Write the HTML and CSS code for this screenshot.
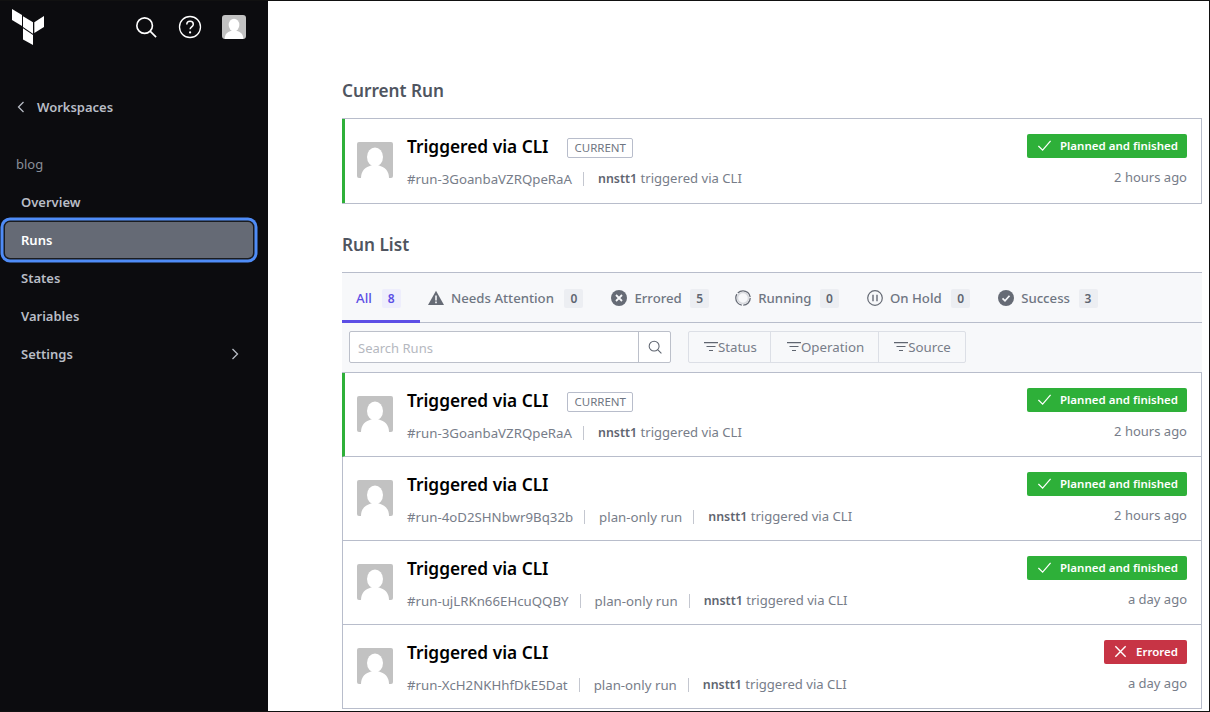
FILE: index.html
```html
<!DOCTYPE html>
<html lang="en">
<head>
<meta charset="UTF-8">
<title>Runs | blog</title>
<link rel="stylesheet" href="styles.css">
</head>
<body>
    <svg class="defs" width="0" height="0">
        <symbol id="avatar" viewBox="0 0 36 36">
            <rect width="36" height="36" fill="#c2c2c2"/>
            <ellipse cx="18" cy="15" rx="8" ry="9.500" fill="#fff"/>
            <path d="M4 36c0-8 5-11 10-12.500h8c5 1.500 10 4.500 10 12.500z" fill="#fff"/>
        </symbol>
        <symbol id="check" viewBox="0 0 16 16">
            <path d="M1.500 8.500 6 13l8.500-10" fill="none" stroke="#fff" stroke-width="1.300"/>
        </symbol>
        <symbol id="cross" viewBox="0 0 16 16">
            <path d="M2.500 2.500l11 11M13.500 2.500l-11 11" fill="none" stroke="#fff" stroke-width="1.500"/>
        </symbol>
        <symbol id="filter" viewBox="0 0 14 10">
            <path d="M0 .7h14M2.500 4.500h9M5 8.500h4" fill="none" stroke="#5f6570" stroke-width="1.200"/>
        </symbol>
        <symbol id="search" viewBox="0 0 24 24">
            <circle cx="10.500" cy="10.500" r="8.500" fill="none" stroke="currentColor" stroke-width="1.800"/>
            <path d="M16.500 16.500 23 23" fill="none" stroke="currentColor" stroke-width="1.800"/>
        </symbol>
    </svg>

    <div class="frame">
        <div class="sidebar">
            <div class="topbar">
                <svg class="logo" viewBox="0 0 33 37" width="33" height="37">
                    <path d="M0 0l10 6v11L0 11z" fill="#fff"/>
                    <path d="M11 7.300l10 6v11.400l-10-6.700z" fill="#fff"/>
                    <path d="M22.300 13.300 32 7v11l-9.700 6z" fill="#fff"/>
                    <path d="M11 19.300l10 6.700v10l-10-5.500z" fill="#fff"/>
                </svg>
                <div class="top-icons">
                    <svg class="top-search" width="22" height="22"><use href="#search"/></svg>
                    <svg width="24" height="24" viewBox="0 0 24 24">
                        <circle cx="12" cy="12" r="10.500" fill="none" stroke="#fff" stroke-width="1.300"/>
                        <path d="M8.800 9.500c0-2 1.400-3.200 3.300-3.200s3.200 1.200 3.200 2.900c0 2.600-3.200 2.600-3.200 5.100" fill="none" stroke="#fff" stroke-width="1.500"/>
                        <circle cx="12.100" cy="17.400" r="1.100" fill="#fff"/>
                    </svg>
                    <svg class="top-avatar" width="24" height="24"><use href="#avatar"/></svg>
                </div>
            </div>

            <div class="back">
                <svg width="8" height="12" viewBox="0 0 8 12"><path d="M6.500 1 1.500 6l5 5" fill="none" stroke="#b8bcc4" stroke-width="1.300"/></svg>
                <span>Workspaces</span>
            </div>

            <div class="ws-name">blog</div>

            <div class="nav">
                <div class="nav-item">Overview</div>
                <div class="nav-item active">Runs</div>
                <div class="nav-item">States</div>
                <div class="nav-item">Variables</div>
                <div class="nav-item">
                    <span>Settings</span>
                    <svg width="8" height="12" viewBox="0 0 8 12"><path d="M1.500 1l5 5-5 5" fill="none" stroke="#b8bcc4" stroke-width="1.300"/></svg>
                </div>
            </div>
        </div>

        <div class="main-content">
            <h2 class="first">Current Run</h2>
            <div class="run-box">
                <div class="run current">
                    <svg class="avatar"><use href="#avatar"/></svg>
                    <div class="run-info">
                        <div class="run-title">Triggered via CLI <span class="tag">CURRENT</span></div>
                        <div class="run-meta"><span>#run-3GoanbaVZRQpeRaA</span><i></i><span class="who"><b>nnstt1</b> triggered via CLI</span></div>
                    </div>
                    <div class="run-status">
                        <div class="badge ok"><svg><use href="#check"/></svg>Planned and finished</div>
                        <div class="when">2 hours ago</div>
                    </div>
                </div>
            </div>

            <h2>Run List</h2>
            <div class="tabs">
                <div class="tab selected">All <span class="count">8</span></div>
                <div class="tab">
                    <svg width="16" height="16" viewBox="0 0 16 16"><path d="M8 .8 16 15H0z" fill="#666b75"/><path d="M8 5.500v5M8 11.500v1.800" stroke="#f7f8fa" stroke-width="1.600"/></svg>
                    Needs Attention <span class="count">0</span>
                </div>
                <div class="tab">
                    <svg width="16" height="16" viewBox="0 0 16 16"><circle cx="8" cy="8" r="8" fill="#666b75"/><path d="M5 5l6 6M11 5l-6 6" stroke="#f7f8fa" stroke-width="1.800"/></svg>
                    Errored <span class="count">5</span>
                </div>
                <div class="tab">
                    <svg width="16" height="16" viewBox="0 0 16 16"><circle cx="8" cy="8" r="7.200" fill="none" stroke="#666b75" stroke-width="1.300" stroke-dasharray="11 1.500 14 1.500 16 1.500"/><circle cx="8" cy="8" r="5.500" fill="none" stroke="#d8dade" stroke-width="1.500"/></svg>
                    Running <span class="count">0</span>
                </div>
                <div class="tab">
                    <svg width="16" height="16" viewBox="0 0 16 16"><circle cx="8" cy="8" r="7.300" fill="none" stroke="#666b75" stroke-width="1.200"/><path d="M6 4.800v6.400M10 4.800v6.400" stroke="#666b75" stroke-width="1.400"/></svg>
                    On Hold <span class="count">0</span>
                </div>
                <div class="tab">
                    <svg width="16" height="16" viewBox="0 0 16 16"><circle cx="8" cy="8" r="8" fill="#666b75"/><path d="M4.500 8.300 7 10.800l4.500-5" fill="none" stroke="#f7f8fa" stroke-width="1.700"/></svg>
                    Success <span class="count">3</span>
                </div>
            </div>

            <div class="filters">
                <div class="search-group">
                    <div class="search-input">Search Runs</div>
                    <div class="search-btn"><svg width="14" height="14"><use href="#search"/></svg></div>
                </div>
                <div class="filter-group">
                    <div class="filter"><svg width="14" height="10"><use href="#filter"/></svg>Status</div>
                    <div class="filter"><svg width="14" height="10"><use href="#filter"/></svg>Operation</div>
                    <div class="filter"><svg width="14" height="10"><use href="#filter"/></svg>Source</div>
                </div>
            </div>

            <div class="run-box list">
                <div class="run current">
                    <svg class="avatar"><use href="#avatar"/></svg>
                    <div class="run-info">
                        <div class="run-title">Triggered via CLI <span class="tag">CURRENT</span></div>
                        <div class="run-meta"><span>#run-3GoanbaVZRQpeRaA</span><i></i><span class="who"><b>nnstt1</b> triggered via CLI</span></div>
                    </div>
                    <div class="run-status">
                        <div class="badge ok"><svg><use href="#check"/></svg>Planned and finished</div>
                        <div class="when">2 hours ago</div>
                    </div>
                </div>
                <div class="run">
                    <svg class="avatar"><use href="#avatar"/></svg>
                    <div class="run-info">
                        <div class="run-title">Triggered via CLI</div>
                        <div class="run-meta"><span>#run-4oD2SHNbwr9Bq32b</span><i></i><span>plan-only run</span><i></i><span class="who"><b>nnstt1</b> triggered via CLI</span></div>
                    </div>
                    <div class="run-status">
                        <div class="badge ok"><svg><use href="#check"/></svg>Planned and finished</div>
                        <div class="when">2 hours ago</div>
                    </div>
                </div>
                <div class="run">
                    <svg class="avatar"><use href="#avatar"/></svg>
                    <div class="run-info">
                        <div class="run-title">Triggered via CLI</div>
                        <div class="run-meta"><span>#run-ujLRKn66EHcuQQBY</span><i></i><span>plan-only run</span><i></i><span class="who"><b>nnstt1</b> triggered via CLI</span></div>
                    </div>
                    <div class="run-status">
                        <div class="badge ok"><svg><use href="#check"/></svg>Planned and finished</div>
                        <div class="when">a day ago</div>
                    </div>
                </div>
                <div class="run">
                    <svg class="avatar"><use href="#avatar"/></svg>
                    <div class="run-info">
                        <div class="run-title">Triggered via CLI</div>
                        <div class="run-meta"><span>#run-XcH2NKHhfDkE5Dat</span><i></i><span>plan-only run</span><i></i><span class="who"><b>nnstt1</b> triggered via CLI</span></div>
                    </div>
                    <div class="run-status">
                        <div class="badge err"><svg><use href="#cross"/></svg>Errored</div>
                        <div class="when">a day ago</div>
                    </div>
                </div>
            </div>
        </div>
    </div>
</body>
</html>
```

FILE: styles.css
```css
html, body {
    margin: 0;
    padding: 0;
    height: 100%;
    overflow: hidden;
}
body {
    font-family: "Noto Sans", "Open Sans", sans-serif;
    font-size: 14px;
    color: #777d89;
    background: #fff;
}
.defs {
    display: block;
    height: 0;
}
.frame {
    display: flex;
    height: 712px;
    box-sizing: border-box;
    border: 1px solid #111;
    border-left: none;
    overflow: hidden;
}
.sidebar {
    width: 268px;
    flex-shrink: 0;
    background: #0c0c0f;
    color: #b9bdc6;
    font-weight: 600;
    font-size: 13px;
}
.topbar {
    display: flex;
    justify-content: space-between;
    padding: 8px 22px 0 12px;
    height: 78px;
    box-sizing: border-box;
}
.top-icons {
    display: flex;
    align-items: center;
    gap: 20px;
    height: 36px;
}
.top-search {
    color: #fff;
    margin-right: 1px;
}
.top-avatar {
    border-radius: 3px;
}
.back {
    display: flex;
    align-items: center;
    gap: 12px;
    padding-left: 17px;
    height: 56px;
}
.ws-name {
    font-weight: 400;
    font-size: 13px;
    color: #8a8f99;
    padding: 0 16px;
    height: 19px;
    line-height: 19px;
    margin: 20px 0 9px;
}
.nav {
    display: flex;
    flex-direction: column;
}
.nav-item {
    display: flex;
    align-items: center;
    justify-content: space-between;
    height: 38px;
    padding: 0 29px 0 21px;
    box-sizing: border-box;
}
.nav-item.active {
    height: 36px;
    margin: 1px 15px 1px 5px;
    padding-left: 16px;
    background: #656a75;
    color: #fff;
    border-radius: 5px;
    box-shadow: 0 0 0 1.500px #1a1c20, 0 0 0 4.500px #4f8cf7;
}
.main-content {
    flex: 1;
    padding: 0 7px 0 74px;
    min-width: 0;
}
h2 {
    font-size: 17.200px;
    font-weight: 600;
    color: #4f5560;
    margin: 0;
    height: 68px;
    line-height: 82px;
    box-sizing: border-box;
}
h2.first {
    height: 117px;
    line-height: 180px;
}
.run-box {
    border: 1px solid #b8bdcb;
    border-left: none;
}
.run-box.list {
    border-bottom: none;
}
.run {
    display: flex;
    height: 84px;
    box-sizing: border-box;
    padding: 23px 14px 0 14px;
    border-left: 1px solid #b8bdcb;
    border-bottom: 1px solid #b8bdcb;
}
.run-box > .run:last-child {
    border-bottom: none;
}
.run-box.list > .run:last-child {
    border-bottom: 1px solid #b8bdcb;
}
.run.current {
    border-left: 3px solid #2eb039;
    padding-left: 12px;
}
.avatar {
    width: 36px;
    height: 36px;
    border-radius: 2px;
    flex-shrink: 0;
    margin-right: 14px;
}
.run-info {
    flex: 1;
    min-width: 0;
}
.run-title {
    font-size: 17.300px;
    font-weight: 600;
    color: #000;
    height: 22px;
    line-height: 22px;
    margin-top: -6px;
    display: flex;
    align-items: center;
}
.tag {
    display: inline-block;
    margin-left: 19px;
    font-size: 11.500px;
    font-weight: 400;
    color: #6f7682;
    border: 1px solid #b8bdcb;
    border-radius: 2px;
    padding: 0 6px;
    height: 18px;
    line-height: 18px;
    margin-top: 1px;
}
.run-meta {
    display: flex;
    align-items: center;
    font-size: 13.250px;
    margin-top: 11px;
    line-height: 18px;
}
.run-meta i {
    width: 1px;
    height: 14px;
    background: #c4c7d0;
    margin: 0 14px 0 11px;
}
.run-meta .who {
    font-size: 13.100px;
}
.run-meta b {
    font-size: 12.400px;
    font-weight: 600;
    color: #5f6570;
}
.run-status {
    display: flex;
    flex-direction: column;
    align-items: flex-end;
    margin-top: -8px;
}
.badge {
    display: flex;
    align-items: center;
    height: 24px;
    box-sizing: border-box;
    padding: 0 9px 1px 10px;
    border-radius: 2px;
    color: #fff;
    font-size: 11.500px;
    font-weight: 600;
}
.badge svg {
    width: 15px;
    height: 15px;
    margin-right: 8px;
}
.badge.ok {
    background: #2eb039;
}
.badge.err {
    background: #c73445;
    padding-left: 9px;
}
.when {
    font-size: 13px;
    margin-top: 10px;
    line-height: 18px;
}
.tabs {
    display: flex;
    height: 51px;
    box-sizing: border-box;
    background: #f7f8fa;
    border-top: 1px solid #b8bdcb;
    border-bottom: 1px solid #b8bdcb;
    font-size: 13.200px;
    font-weight: 500;
    color: #6f7682;
}
.tab {
    display: flex;
    align-items: center;
    gap: 7px;
    padding: 0 14px;
    height: 50px;
    box-sizing: border-box;
}
.tab.selected {
    color: #5c4ee5;
    border-bottom: 3px solid #5c4ee5;
    padding-top: 3px;
    width: 78px;
    margin-right: -6px;
}
.tab:nth-child(3) {
    margin-right: -2px;
}
.count {
    display: inline-block;
    background: #eceef2;
    color: #5f6570;
    border-radius: 2px;
    width: 19px;
    height: 19px;
    line-height: 19px;
    text-align: center;
    font-size: 12px;
    font-weight: 600;
    margin-left: 1.500px;
}
.tab:nth-child(2) .count {
    margin-left: 3.500px;
}
.tab:nth-child(5) .count {
    margin-left: 2.500px;
}
.tab.selected .count {
    background: #eeeefc;
    color: #5c4ee5;
    margin-left: 3px;
}
.filters {
    display: flex;
    align-items: flex-start;
    gap: 17px;
    height: 49px;
    box-sizing: border-box;
    padding: 8px 7px 0;
    background: #f7f8fa;
}
.search-group {
    display: flex;
    height: 32px;
    width: 322px;
    box-sizing: border-box;
    border: 1px solid #bcc0ca;
    border-radius: 2px;
    background: #fff;
}
.search-input {
    flex: 1;
    font-size: 13px;
    line-height: 32px;
    padding-left: 8px;
    color: #b5b8c0;
}
.search-btn {
    width: 31px;
    border-left: 1px solid #bcc0ca;
    display: flex;
    align-items: center;
    justify-content: center;
    color: #5f6570;
}
.filter-group {
    display: flex;
    height: 32px;
    box-sizing: border-box;
    border: 1px solid #dcdfe6;
    border-radius: 2px;
}
.filter {
    display: flex;
    align-items: center;
    padding: 0 14px 0 16px;
    font-size: 13.300px;
    border-left: 1px solid #dcdfe6;
}
.filter:first-child {
    border-left: none;
    padding: 0 13px 0 15px;
}
.filter:last-child {
    padding-left: 15px;
}
```
